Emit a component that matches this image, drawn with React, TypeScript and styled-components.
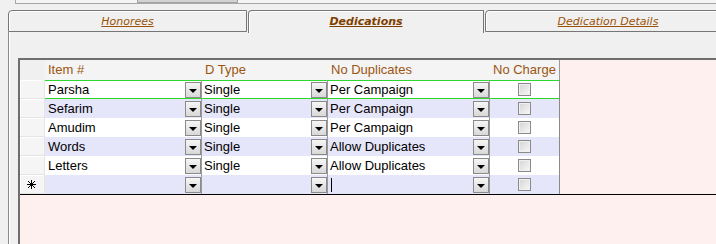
import styled, { createGlobalStyle } from "styled-components";

type RowData = {
  item: string;
  dtype: string;
  nodup: string;
};

const rows: RowData[] = [
  { item: "Parsha", dtype: "Single", nodup: "Per Campaign" },
  { item: "Sefarim", dtype: "Single", nodup: "Per Campaign" },
  { item: "Amudim", dtype: "Single", nodup: "Per Campaign" },
  { item: "Words", dtype: "Single", nodup: "Allow Duplicates" },
  { item: "Letters", dtype: "Single", nodup: "Allow Duplicates" },
];

const GlobalStyle = createGlobalStyle`
  html, body {
    margin: 0;
    padding: 0;
    background: #f0f0f0;
    overflow: hidden;
  }
`;

// new-record marker in the row selector
const NewRecordIcon = () => (
  <svg width="9" height="9" viewBox="0 0 9 9" shapeRendering="crispEdges">
    <path
      d="M4.5 0V9M0 4.5H9M1.2 1.2L7.8 7.8M7.8 1.2L1.2 7.8"
      stroke="#000"
      strokeWidth="1"
      fill="none"
    />
  </svg>
);

export default function App() {
  return (
    <>
      <GlobalStyle />
      <Screen>
        {/* scroll strip of the form above */}
        <TopStrip>
          <Thumb />
        </TopStrip>

        <TabRow>
          <Tab $width={239}>
            <TabLabel>Honorees</TabLabel>
          </Tab>
          <Tab $width={236} $active>
            <TabLabel $active>Dedications</TabLabel>
          </Tab>
          <Tab $width={246}>
            <TabLabel>Dedication Details</TabLabel>
          </Tab>
        </TabRow>

        <Panel>
          <Subform>
            <Datasheet>
              <HeaderRow>
                <Selector $header />
                <HeadCell>Item #</HeadCell>
                <HeadCell>D Type</HeadCell>
                <HeadCell>No Duplicates</HeadCell>
                <HeadCell $last>No Charge</HeadCell>
              </HeaderRow>

              {rows.map((r, i) => (
                <Row key={r.item}>
                  <Selector />
                  <Cell $alt={i % 2 === 1} $selected={i === 0} $pad={3}>
                    <CellText>{r.item}</CellText>
                    <DropButton />
                  </Cell>
                  <Cell $alt={i % 2 === 1} $selected={i === 0}>
                    <CellText>{r.dtype}</CellText>
                    <DropButton />
                  </Cell>
                  <Cell $alt={i % 2 === 1} $selected={i === 0}>
                    <CellText>{r.nodup}</CellText>
                    <DropButton />
                  </Cell>
                  <CheckCell $alt={i % 2 === 1} $selected={i === 0}>
                    <Check />
                  </CheckCell>
                </Row>
              ))}

              {/* new record row */}
              <Row>
                <Selector>
                  <NewRecordIcon />
                </Selector>
                <Cell $alt $pad={3}>
                  <CellText />
                  <DropButton />
                </Cell>
                <Cell $alt>
                  <CellText />
                  <DropButton />
                </Cell>
                <Cell $alt>
                  <CellText>
                    <Caret />
                  </CellText>
                  <DropButton />
                </Cell>
                <CheckCell $alt>
                  <Check />
                </CheckCell>
              </Row>
            </Datasheet>
            <BottomLine />
          </Subform>
        </Panel>
      </Screen>
    </>
  );
}

const Screen = styled.div`
  width: 716px;
  height: 244px;
  overflow: hidden;
  display: flex;
  flex-direction: column;
  background: #f0f0f0;
`;

const TopStrip = styled.div`
  margin-left: 15px;
  height: 3px;
  border-left: 1px solid #a8a8a8;
  border-bottom: 1px solid #a8a8a8;
  padding-left: 121px;
  background: #f4f4f4;
`;

const Thumb = styled.div`
  width: 99px;
  height: 2px;
  background: #d2d2d2;
  border: 1px solid #a4a4a4;
  border-top: none;
`;

const TabRow = styled.div`
  display: flex;
  gap: 1px;
  margin-top: 6px;
  padding-left: 8px;
  height: 22px;
`;

const Tab = styled.div<{ $width: number; $active?: boolean }>`
  flex: none;
  width: ${(p) => p.$width}px;
  box-sizing: border-box;
  height: ${(p) => (p.$active ? "23px" : "22px")};
  border: 1px solid #767676;
  border-bottom: ${(p) => (p.$active ? "none" : "1px solid #767676")};
  border-radius: 4px 0 0 0;
  background: #f0f0f0;
  box-shadow: inset 1px 1px #ffffff;
  display: flex;
  justify-content: center;
  padding-top: 4px;
  position: relative;
  z-index: ${(p) => (p.$active ? 1 : 0)};
`;

const TabLabel = styled.span<{ $active?: boolean }>`
  font-family: "DejaVu Sans", Verdana, sans-serif;
  font-size: 11px;
  font-style: italic;
  font-weight: ${(p) => (p.$active ? 700 : 400)};
  color: ${(p) => (p.$active ? "#7f3f00" : "#9a5308")};
  text-decoration: underline;
  line-height: 14px;
`;

const Panel = styled.div`
  flex: 1;
  margin-left: 8px;
  border-left: 1px solid #8a8a8a;
  box-shadow: inset 1px 0 #ffffff;
  padding: 26px 0 0 9px;
  display: flex;
`;

const Subform = styled.div`
  flex: 1;
  border-top: 2px solid #6e6e6e;
  border-left: 2px solid #6e6e6e;
  background: #fff0f0;
  display: flex;
  flex-direction: column;
  align-items: flex-start;
`;

const Datasheet = styled.div`
  width: 540px;
  font-family: "Liberation Sans", Arial, sans-serif;
  font-size: 13px;
`;

const columns = "25px 157px 126px 162px 70px";

const HeaderRow = styled.div`
  display: grid;
  grid-template-columns: ${columns};
  height: 20px;
`;

const Row = styled.div`
  display: grid;
  grid-template-columns: ${columns};
  height: 19px;
`;

const Selector = styled.div<{ $header?: boolean }>`
  background: ${(p) => (p.$header ? "#f0f0f0" : "#f5f5f5")};
  box-shadow: ${(p) =>
    p.$header ? "none" : "inset -1px -1px #e4e4e4, inset 1px 1px #ffffff"};
  display: flex;
  align-items: center;
  justify-content: center;
  padding-right: 2px;
`;

const HeadCell = styled.div<{ $last?: boolean }>`
  background: #f4f4f4;
  color: #9c5410;
  padding-left: 3px;
  line-height: 20px;
  border-right: ${(p) => (p.$last ? "1px solid #9a9a9a" : "none")};
  white-space: nowrap;
`;

const Cell = styled.div<{ $alt?: boolean; $selected?: boolean; $pad?: number }>`
  display: flex;
  align-items: center;
  padding-left: ${(p) => p.$pad ?? 2}px;
  background: ${(p) => (p.$alt ? "#e6e6fa" : "#ffffff")};
  border-right: 1px solid #9a9a9a;
  box-shadow: ${(p) =>
    p.$selected ? "inset 0 1px #2bd82b, inset 0 -1px #2bd82b" : "none"};
  min-width: 0;
`;

const CellText = styled.span`
  flex: 1;
  color: #000;
  white-space: nowrap;
  overflow: hidden;
  display: flex;
  align-items: center;
`;

const Caret = styled.span`
  display: block;
  width: 1px;
  height: 14px;
  background: #000;
  margin-left: 1px;
`;

const DropButton = styled.div`
  flex: none;
  width: 16px;
  height: 16px;
  box-sizing: border-box;
  border: 1px solid #8a8a8a;
  background: linear-gradient(#f6f6f6, #d8d8d8);
  display: flex;
  align-items: center;
  justify-content: center;
  padding-top: 3px;

  &::after {
    content: "";
    width: 0;
    height: 0;
    border-left: 4px solid transparent;
    border-right: 4px solid transparent;
    border-top: 4px solid #000;
  }
`;

const CheckCell = styled.div<{ $alt?: boolean; $selected?: boolean }>`
  display: flex;
  align-items: center;
  justify-content: center;
  background: ${(p) => (p.$alt ? "#e6e6fa" : "#ffffff")};
  border-right: 1px solid #8a8a8a;
  box-shadow: ${(p) =>
    p.$selected ? "inset 0 1px #2bd82b, inset 0 -1px #2bd82b" : "none"};
`;

const Check = styled.div`
  width: 13px;
  height: 13px;
  box-sizing: border-box;
  border: 1px solid #8a8a8a;
  background: linear-gradient(135deg, #d4d4d4, #f8f8f8);
  box-shadow: inset 0 0 0 1px #f0f0f0;
`;

const BottomLine = styled.div`
  align-self: stretch;
  height: 0;
  border-top: 1px solid #000;
`;
